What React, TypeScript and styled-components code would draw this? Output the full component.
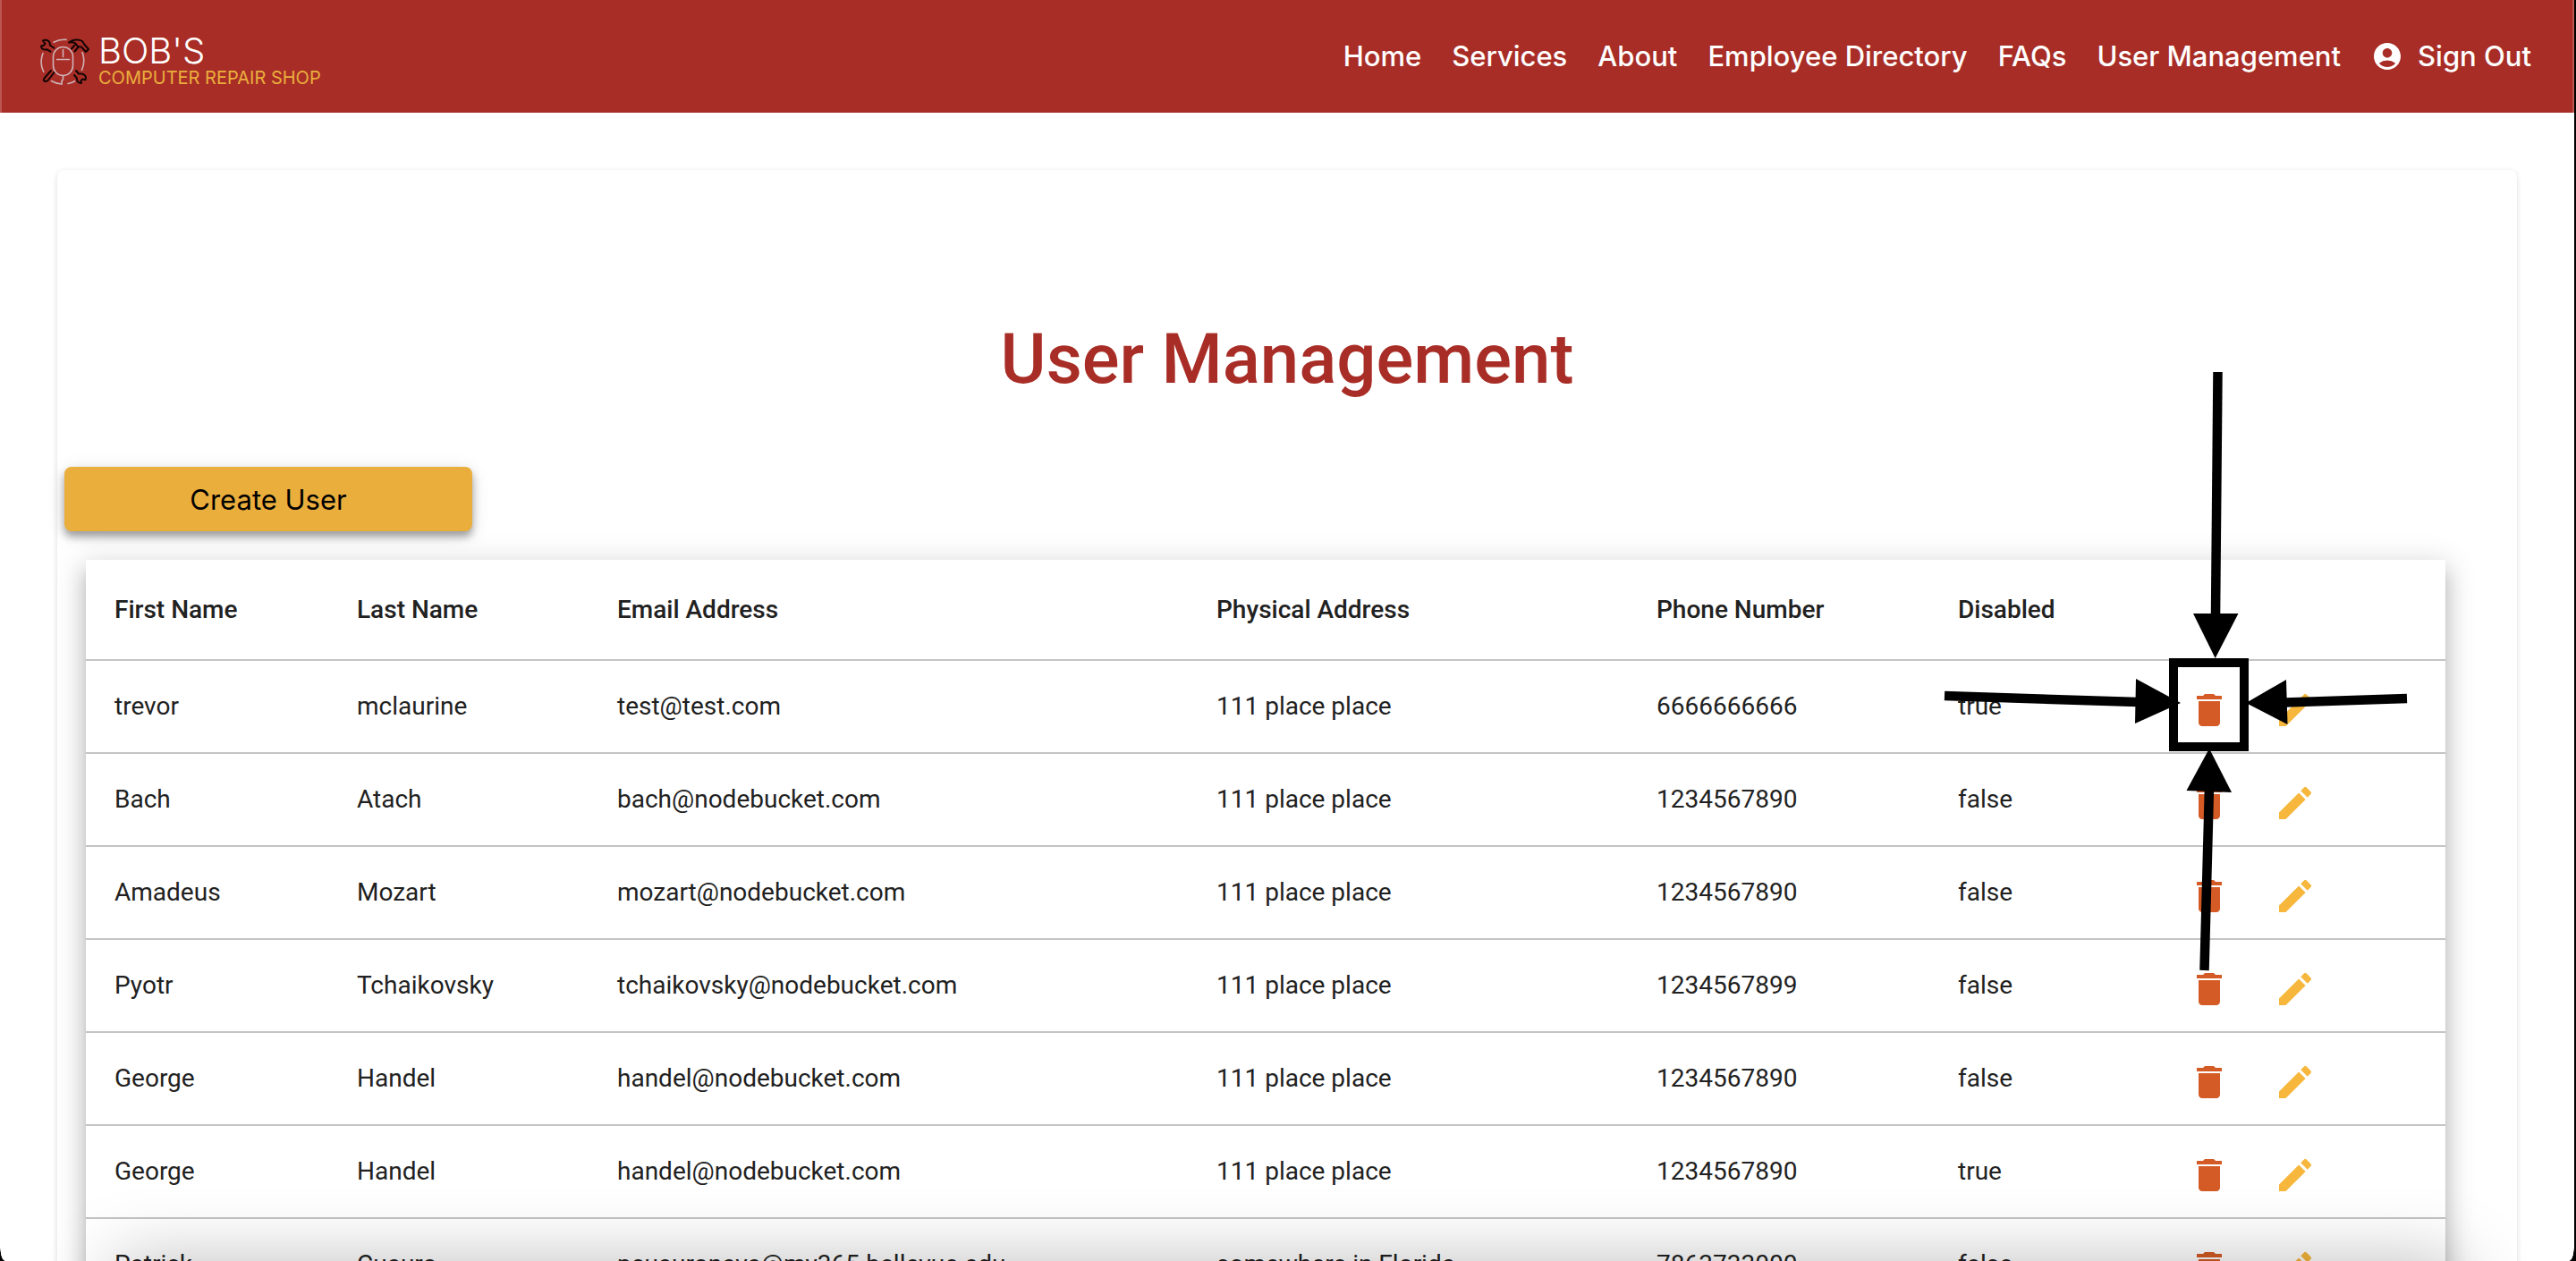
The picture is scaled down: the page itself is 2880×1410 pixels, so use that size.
import React from "react";
import styled, { createGlobalStyle } from "styled-components";
import { MdAccountCircle, MdDelete, MdEdit } from "react-icons/md";

const brand = "#a82d26";
const uiFont = `Inter, "Liberation Sans", sans-serif`;
const tableFont = `Roboto, "Liberation Sans", sans-serif`;

const GlobalStyle = createGlobalStyle`
  *, *::before, *::after { box-sizing: border-box; }
  html, body, #root { height: 100%; }
  body {
    margin: 0;
    overflow: hidden;
    background: #ffffff;
    color: #212121;
    font-family: ${tableFont};
  }
`;

const Page = styled.div`
  position: relative;
  height: 100vh;
  overflow: hidden;
  border-right: 2px solid #000000;
`;

const Header = styled.header`
  display: flex;
  align-items: center;
  justify-content: space-between;
  height: 126px;
  padding: 0 46px 0 42px;
  background: ${brand};
  border: solid #bb5650;
  border-width: 0 2px;
`;

const Brand = styled.a`
  display: flex;
  align-items: center;
  gap: 10px;
  padding-top: 12px;
  text-decoration: none;
  font-family: ${uiFont};
`;

const BrandText = styled.span`
  display: flex;
  flex-direction: column;
`;

const BrandName = styled.span`
  font-size: 40px;
  line-height: 36px;
  font-weight: 300;
  color: #ffffff;
`;

const BrandTagline = styled.span`
  font-size: 20px;
  line-height: 24px;
  color: #eaae3d;
`;

const Nav = styled.nav`
  display: flex;
  align-items: center;
  gap: 34px;
`;

const NavLink = styled.a`
  display: flex;
  align-items: center;
  gap: 16px;
  color: #ffffff;
  font-family: ${uiFont};
  font-size: 31px;
  line-height: 40px;
  font-weight: 500;
  text-decoration: none;
  white-space: nowrap;
`;

const Main = styled.main`
  padding: 64px;
`;

const Card = styled.section`
  padding-top: 160px;
  padding-bottom: 64px;
  border-radius: 8px;
  background: #ffffff;
  box-shadow: 0 4px 2px -2px rgba(0, 0, 0, 0.06), 0 2px 6px rgba(0, 0, 0, 0.14);
`;

const Title = styled.h1`
  margin: 0 0 68px;
  color: ${brand};
  font-size: 78px;
  line-height: 104px;
  font-weight: 500;
  text-align: center;
`;

const CreateButton = styled.button`
  display: block;
  width: 456px;
  height: 72px;
  margin: 0 8px 32px;
  padding: 2px 0 0;
  border: 0;
  border-radius: 8px;
  background: #eaae3d;
  color: #000000;
  font-family: ${uiFont};
  font-size: 31px;
  line-height: 40px;
  box-shadow: 0 6px 8px rgba(0, 0, 0, 0.32), 0 4px 20px rgba(0, 0, 0, 0.14);
  cursor: pointer;
`;

const TableWrap = styled.div`
  margin: 0 80px 0 32px;
  background: #ffffff;
  box-shadow: 0 10px 10px -6px rgba(0, 0, 0, 0.2),
    0 16px 20px 2px rgba(0, 0, 0, 0.14), 0 6px 32px 4px rgba(0, 0, 0, 0.14);
`;

const Table = styled.table`
  width: 100%;
  table-layout: fixed;
  border-collapse: separate;
  border-spacing: 0;
  font-size: 28px;
  line-height: 40px;
`;

const Col = styled.col<{ $share: number }>`
  width: ${(p) => p.$share * 100}%;
`;

const HeadCell = styled.th`
  height: 113px;
  padding: 0;
  border-bottom: 2px solid #c4c4c4;
  font-weight: 500;
  text-align: left;
  white-space: nowrap;
  &:first-child { padding-left: 32px; }
`;

const Cell = styled.td`
  height: 104px;
  padding: 0;
  border-bottom: 2px solid #c4c4c4;
  white-space: nowrap;
  &:first-child { padding-left: 32px; }
`;

const ActionCell = styled(Cell)`
  padding-top: 8px;
`;

const Actions = styled.div`
  display: flex;
  gap: 48px;
`;

const IconButton = styled.button<{ $color: string }>`
  position: relative;
  display: flex;
  width: 48px;
  height: 48px;
  padding: 0;
  border: 0;
  background: none;
  color: ${(p) => p.$color};
  cursor: pointer;
`;

const Callout = styled.svg`
  position: absolute;
  z-index: 1;
  left: -276px;
  top: -360px;
  pointer-events: none;
`;

const BottomShade = styled.div`
  position: absolute;
  left: 128px;
  right: 128px;
  top: 100%;
  height: 120px;
  box-shadow: 0 0 80px rgba(0, 0, 0, 0.26);
  pointer-events: none;
`;

const Corner = styled.span<{ $side: "left" | "right" }>`
  position: absolute;
  bottom: 0;
  ${(p) => p.$side}: 0;
  width: 5px;
  height: 16px;
  background: radial-gradient(
    ellipse 5px 16px at ${(p) => (p.$side === "left" ? "right" : "left")} top,
    transparent 90%,
    #000000 100%
  );
`;

const columns = [
  { label: "First Name", width: 303 },
  { label: "Last Name", width: 291 },
  { label: "Email Address", width: 670 },
  { label: "Physical Address", width: 492 },
  { label: "Phone Number", width: 337 },
  { label: "Disabled", width: 257 },
  { label: "", width: 288 },
];
const totalWidth = columns.reduce((sum, c) => sum + c.width, 0);

const users = [
  ["trevor", "mclaurine", "test@test.com", "111 place place", "6666666666", "true"],
  ["Bach", "Atach", "bach@nodebucket.com", "111 place place", "1234567890", "false"],
  ["Amadeus", "Mozart", "mozart@nodebucket.com", "111 place place", "1234567890", "false"],
  ["Pyotr", "Tchaikovsky", "tchaikovsky@nodebucket.com", "111 place place", "1234567899", "false"],
  ["George", "Handel", "handel@nodebucket.com", "111 place place", "1234567890", "false"],
  ["George", "Handel", "handel@nodebucket.com", "111 place place", "1234567890", "true"],
  ["Patrick", "Cuauro", "pcuauronava@my365.bellevue.edu", "somewhere in Florida", "7863733000", "false"],
];

const navLinks = ["Home", "Services", "About", "Employee Directory", "FAQs", "User Management"];

function Logo() {
  return (
    <svg width="56" height="52" viewBox="0 0 56 52" fill="none" strokeWidth="1.6" strokeLinecap="round" strokeLinejoin="round" aria-hidden="true">
      <g stroke="#cfb3b8">
        <rect x="15.5" y="9.5" width="22" height="32" rx="11" />
        <path d="M26.5 12.500v8M19.500 23.500h14M26.500 42v3.500l-1.500 2.500v3" />
        <path d="M16 4.200a25 25 0 0 1 14-2.800M4 16.500a26 26 0 0 0 .8 21M48 15.500a26 26 0 0 1-.6 20M13.500 47.500a25 25 0 0 0 11.500 3.500M32 50.500a25 25 0 0 0 7.500-2.800" />
      </g>
      <g stroke="#120404" strokeWidth="2">
        <path d="M4 2.500c3-1.500 6.500-.5 7.500 2.200.4 1.200.2 2 .3 2.800l4.700 3.300M2 8.500c0 3 3 4.700 6.300 3.700l4.200 2.500M4 2.500l2.500 3.300-1.600 2-2.900.7" />
        <path d="M33 4.500c4-3.500 11-4 15-1.500l2.500 4 4.500 5-3 3-5-5.500-4-.5-2.500-3.500c-2-1.500-5-1.500-7.500-1zM39.500 7.500l-3.500 4M44 9l-4.500 5.500" />
        <path d="M13 36l-7.500 8.500c-1.500 2-.5 3.500 1.500 3.500l2.500-1L16.500 38" />
        <path d="M39 41l3 3.500c-.5 3 1.500 5.500 5 5.500l-.5-3 2-1.500 3 .8c1.500-3-.5-6.800-4.500-6.800-1.500 0-2 .3-3 0L41 36" />
      </g>
    </svg>
  );
}

function DeleteCallout() {
  return (
    <Callout width="530" height="680" viewBox="2170 410 530 680" aria-hidden="true">
      <rect x="2430" y="741" width="79" height="94" fill="none" stroke="#000" strokeWidth="10" />
      <g stroke="#000" strokeWidth="10.500">
        <path d="M2479.500 416L2477 690" />
        <path d="M2174 778L2390 785" />
        <path d="M2691 781L2555 785.500" />
        <path d="M2464.500 1085L2470 880" />
      </g>
      <path d="M2452 686h50.500L2476.700 736z" />
      <path d="M2388 759L2387 809L2438 786z" />
      <path d="M2556 760L2557.500 810L2511 786z" />
      <path d="M2444.500 884L2495 886L2470 837z" />
    </Callout>
  );
}

export default function App() {
  return (
    <Page>
      <GlobalStyle />
      <Header>
        <Brand href="#home" aria-label="Bob's Computer Repair Shop">
          <Logo />
          <BrandText>
            <BrandName>BOB'S</BrandName>
            <BrandTagline>COMPUTER REPAIR SHOP</BrandTagline>
          </BrandText>
        </Brand>
        <Nav>
          {navLinks.map((label) => (
            <NavLink key={label} href="#">
              {label}
            </NavLink>
          ))}
          <NavLink href="#signout">
            <MdAccountCircle size={36} />
            Sign Out
          </NavLink>
        </Nav>
      </Header>
      <Main>
        <Card>
          <Title>User Management</Title>
          <CreateButton type="button">Create User</CreateButton>
          <TableWrap>
            <Table>
              <colgroup>
                {columns.map((c, i) => (
                  <Col key={i} $share={c.width / totalWidth} />
                ))}
              </colgroup>
              <thead>
                <tr>
                  {columns.map((c, i) => (
                    <HeadCell key={i} scope="col">
                      {c.label}
                    </HeadCell>
                  ))}
                </tr>
              </thead>
              <tbody>
                {users.map((user, row) => (
                  <tr key={row}>
                    {user.map((value, i) => (
                      <Cell key={i}>{value}</Cell>
                    ))}
                    <ActionCell>
                      <Actions>
                        <IconButton type="button" $color="#d45b25" aria-label="Delete user">
                          <MdDelete size={48} />
                          {row === 0 && <DeleteCallout />}
                        </IconButton>
                        <IconButton type="button" $color="#f6b73c" aria-label="Edit user">
                          <MdEdit size={48} />
                        </IconButton>
                      </Actions>
                    </ActionCell>
                  </tr>
                ))}
              </tbody>
            </Table>
          </TableWrap>
        </Card>
      </Main>
      <BottomShade />
      <Corner $side="left" />
      <Corner $side="right" />
    </Page>
  );
}
